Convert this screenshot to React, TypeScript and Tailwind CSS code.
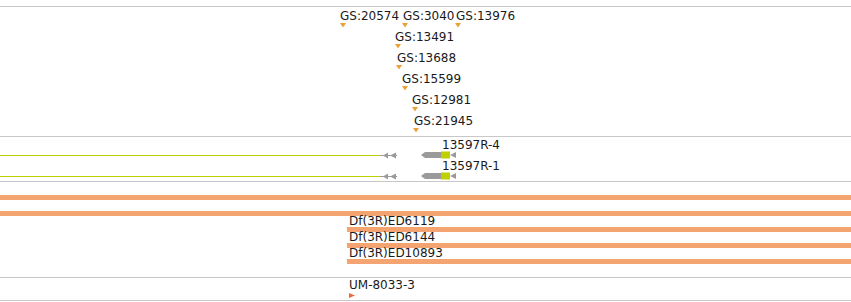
import React from "react";

type GS = { label: string; x: number; tx: number };

const gsRows: GS[][] = [
  [
    { label: "GS:20574", x: 340, tx: 0 },
    { label: "GS:3040", x: 402, tx: 1 },
    { label: "GS:13976", x: 455, tx: 1 },
  ],
  [{ label: "GS:13491", x: 395, tx: 0 }],
  [{ label: "GS:13688", x: 396, tx: 1 }],
  [{ label: "GS:15599", x: 402, tx: 0 }],
  [{ label: "GS:12981", x: 412, tx: 0 }],
  [{ label: "GS:21945", x: 413, tx: 1 }],
];

function Transcript() {
  return (
    <svg width={470} height={8} viewBox="0 0 470 8" className="block">
      <line x1={0} y1={4.5} x2={380} y2={4.5} stroke="#bfd000" strokeWidth={1} />
      <line x1={380} y1={4.5} x2={397} y2={4.5} stroke="#9a9a9a" strokeWidth={1} />
      <polygon points="383,4.5 388,1.5 388,7.5" fill="#9a9a9a" />
      <polygon points="390,4.5 396,1.5 396,7.5" fill="#9a9a9a" />
      <polygon points="421,4 425,1 441,1 441,7 425,7" fill="#9a9a9a" />
      <rect x={441} y={0.5} width={9} height={7} fill="#bfd000" />
      <polygon points="450,4 456,1 456,7" fill="#9a9a9a" />
    </svg>
  );
}

function TranscriptRow({ label }: { label: string }) {
  return (
    <div className="flex flex-col">
      <div className="pl-[442px] leading-[12px] h-[12px] whitespace-nowrap">{label}</div>
      <Transcript />
    </div>
  );
}

function DfRow({ label }: { label: string }) {
  return (
    <div className="flex flex-col">
      <div className="pl-[2px] h-[11px] leading-[11px] whitespace-nowrap">{label}</div>
      <div className="h-[5px] bg-[#f4a470]" />
    </div>
  );
}

export default function App() {
  return (
    <div className="w-[851px] h-[302px] overflow-hidden bg-white font-['DejaVu_Sans',sans-serif] text-[12px] leading-[14px] text-[#1a1a1a] pt-[6px]">
      {/* GS track */}
      <div className="h-[130px] border-t border-[#c8c8c8] flex flex-col pt-[2px]">
        {gsRows.map((row, i) => (
          <div key={i} className="relative h-[21px] shrink-0">
            {row.map((g) => (
              <div
                key={g.label}
                className="absolute top-0 flex flex-col"
                style={{ left: g.x }}
              >
                <span className="whitespace-nowrap" style={{ paddingLeft: g.tx }}>
                  {g.label}
                </span>
                <svg width={6} height={5} viewBox="0 0 6 5" className="block">
                  <polygon points="0,0 6,0 3,4.5" fill="#eba135" />
                </svg>
              </div>
            ))}
          </div>
        ))}
      </div>
      {/* transcript track */}
      <div className="h-[45px] border-t border-[#c8c8c8] flex flex-col gap-[1px] pt-[2px]">
        <TranscriptRow label="13597R-4" />
        <TranscriptRow label="13597R-1" />
      </div>
      {/* deficiency track */}
      <div className="h-[96px] border-t border-[#c8c8c8] flex flex-col pt-[13px]">
        <div className="h-[5px] bg-[#f4a470]" />
        <div className="h-[11px]" />
        <div className="h-[5px] bg-[#f4a470]" />
        <div className="pl-[347px] flex flex-col">
          <DfRow label="Df(3R)ED6119" />
          <DfRow label="Df(3R)ED6144" />
          <DfRow label="Df(3R)ED10893" />
        </div>
      </div>
      {/* UM track */}
      <div className="h-[23px] border-t border-[#c8c8c8] flex flex-col pl-[349px]">
        <div className="whitespace-nowrap">UM-8033-3</div>
        <svg width={6} height={5} viewBox="0 0 6 5" className="block mt-[1px]">
          <polygon points="0,0 6,2.5 0,5" fill="#f0683a" />
        </svg>
      </div>
      <div className="border-t border-[#c8c8c8]" />
    </div>
  );
}
